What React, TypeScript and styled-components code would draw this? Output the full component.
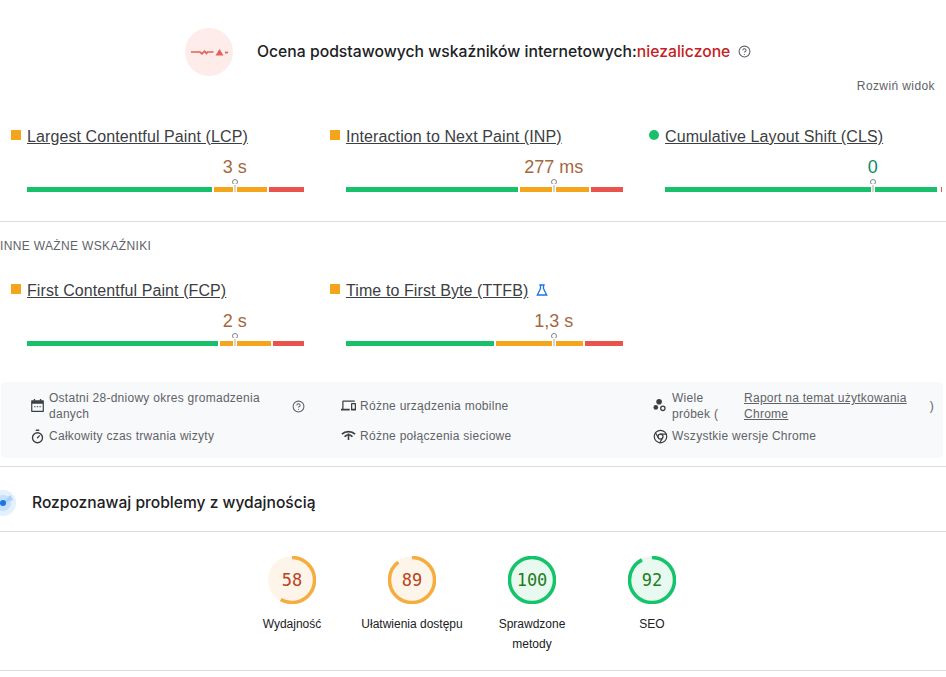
import React from "react";
import styled, { createGlobalStyle } from "styled-components";
import { Chromium, CircleHelp, Timer } from "lucide-react";

const GlobalStyle = createGlobalStyle`
  html, body {
    margin: 0;
    background: #ffffff;
    overflow: hidden;
  }
  body {
    font-family: "Liberation Sans", Arial, sans-serif;
    color: #202124;
  }
`;

type Rating = "average" | "good";

const metricsTop = [
  { name: "Largest Contentful Paint (LCP)", value: "3 s", rating: "average", segs: [185, 53, 35] },
  { name: "Interaction to Next Paint (INP)", value: "277 ms", rating: "average", segs: [172, 69, 32] },
  { name: "Cumulative Layout Shift (CLS)", value: "0", rating: "good", segs: [273, 0, 1] },
];

const metricsOther = [
  { name: "First Contentful Paint (FCP)", value: "2 s", rating: "average", segs: [191, 51, 31] },
  { name: "Time to First Byte (TTFB)", value: "1,3 s", rating: "average", segs: [148, 87, 38], lab: true },
];

const gauges = [
  { label: "Wydajność", score: 58 },
  { label: "Ułatwienia dostępu", score: 89 },
  { label: "Sprawdzone metody", score: 100 },
  { label: "SEO", score: 92 },
];

function CalendarIcon() {
  return (
    <InfoSvg viewBox="0 0 16 16">
      <path d="M4 1h1.500v2H4zM10.500 1H12v2h-1.500z" fill="#3c4043" />
      <path d="M2 2.500h12a.8.8 0 0 1 .8.8v10.900a.8.8 0 0 1-.8.8H2a.8.8 0 0 1-.8-.8V3.300a.8.8 0 0 1 .8-.8zM2.500 6v7.700h11V6z" fill="#3c4043" fillRule="evenodd" />
      <path d="M4.500 8.500h1.400v1.400H4.500zM7.300 8.500h1.400v1.400H7.300zM10.100 8.500h1.400v1.400h-1.400z" fill="#5f6368" />
    </InfoSvg>
  );
}

function DevicesIcon() {
  return (
    <InfoSvg viewBox="0 0 24 24">
      <path
        d="M4 6h18V4H4c-1.100 0-2 .9-2 2v11H0v3h14v-3H4V6zm19 2h-6c-.55 0-1 .45-1 1v10c0 .55.45 1 1 1h6c.55 0 1-.45 1-1V9c0-.55-.45-1-1-1zm-1 9h-4v-7h4v7z"
        fill="#3c4043"
      />
    </InfoSvg>
  );
}

function NetworkIcon() {
  return (
    <InfoSvg viewBox="0 0 16 16">
      <path d="M1 6.600C4.800 2.900 11.200 2.900 15 6.600" fill="none" stroke="#3c4043" strokeWidth="2" />
      <path d="M3.800 9.300C5 8 6.300 7.400 7.300 7.300M8.700 7.300c1.200.1 2.500.7 3.500 2" fill="none" stroke="#3c4043" strokeWidth="1.800" />
      <path d="M8 5.800v7" stroke="#3c4043" strokeWidth="1.700" />
    </InfoSvg>
  );
}

function SamplesIcon() {
  return (
    <InfoSvg viewBox="0 0 16 16">
      <circle cx="6.500" cy="4" r="3" fill="#3c4043" />
      <circle cx="3" cy="10" r="2.500" fill="#3c4043" />
      <circle cx="10.500" cy="11" r="2.300" fill="none" stroke="#3c4043" strokeWidth="1.400" />
    </InfoSvg>
  );
}

function Gauge({ score }: { score: number }) {
  const good = score >= 90;
  const radius = 22.5;
  const length = 2 * Math.PI * radius;
  return (
    <GaugeRing>
      <svg viewBox="0 0 48 48" width="48" height="48">
        <circle cx="24" cy="24" r="24" fill={good ? "#e8f9f0" : "#fef5ea"} />
        <circle
          cx="24"
          cy="24"
          r={radius}
          fill="none"
          stroke={good ? "#14c46b" : "#f5ad3f"}
          strokeWidth="3.500"
          strokeDasharray={`${(length * score) / 100} ${length}`}
          transform="rotate(-90 24 24)"
        />
      </svg>
      <GaugeScore $good={good}>{score}</GaugeScore>
    </GaugeRing>
  );
}

function MetricCard({ name, value, rating, segs, lab }: { name: string; value: string; rating: string; segs: number[]; lab?: boolean }) {
  return (
    <Card>
      <TitleRow>
        <StatusMark $rating={rating as Rating} />
        <MetricLink>{name}</MetricLink>
        {lab && (
          <LabIcon viewBox="0 0 12 12">
            <path d="M3.300 1h5.400M4.500 1v3.500L1.300 11h9.400L7.500 4.500V1" fill="none" stroke="#1a73e8" strokeWidth="1.300" />
          </LabIcon>
        )}
      </TitleRow>
      <CardBody>
        <Value $rating={rating as Rating}>{value}</Value>
        <Bar>
          <Segment $w={segs[0]} $color="#19c06c" />
          <Segment $w={segs[1]} $color="#f5a51c" />
          <Segment $w={segs[2]} $color="#e8544c" />
          <Marker />
        </Bar>
      </CardBody>
    </Card>
  );
}

export default function App() {
  return (
    <Page>
      <GlobalStyle />
      <Header>
        <Badge>
          <svg viewBox="0 0 48 48" width="48" height="48">
            <path d="M6 24h9l2 1.800 2.500-2.600 2 2.200 1-1.400h6" fill="none" stroke="#e0635a" strokeWidth="1.700" />
            <path d="M30.500 27.500l4-6.500 4 6.500z" fill="#e0635a" />
            <path d="M40 24.500h3" stroke="#e0635a" strokeWidth="1.700" />
          </svg>
        </Badge>
        <Verdict>
          Ocena podstawowych wskaźników internetowych:<Failed>niezaliczone</Failed>
        </Verdict>
        <HelpGlyph size={13} />
      </Header>
      <ExpandRow>Rozwiń widok</ExpandRow>

      <MetricGrid>
        {metricsTop.map((m) => (
          <MetricCard key={m.name} {...m} />
        ))}
      </MetricGrid>

      <Divider $top={29} />
      <SectionLabel>INNE WAŻNE WSKAŹNIKI</SectionLabel>

      <MetricGrid $top={26}>
        {metricsOther.map((m) => (
          <MetricCard key={m.name} {...m} />
        ))}
      </MetricGrid>

      <InfoBox>
        <InfoItem>
          <CalendarIcon />
          <InfoRest>
            <PeriodText>Ostatni 28-dniowy okres gromadzenia danych</PeriodText>
            <InfoHelp size={13} />
          </InfoRest>
        </InfoItem>
        <InfoItem>
          <DevicesIcon />
          <InfoRest>Różne urządzenia mobilne</InfoRest>
        </InfoItem>
        <InfoItem>
          <SamplesIcon />
          <InfoRest>
            <SampleText>Wiele próbek (</SampleText>
            <ReportLink>Raport na temat użytkowania Chrome</ReportLink>
            <span>)</span>
          </InfoRest>
        </InfoItem>
        <InfoItem>
          <Timer size={15} color="#3c4043" strokeWidth={2.2} />
          <InfoRest>Całkowity czas trwania wizyty</InfoRest>
        </InfoItem>
        <InfoItem>
          <NetworkIcon />
          <InfoRest>Różne połączenia sieciowe</InfoRest>
        </InfoItem>
        <InfoItem>
          <Chromium size={15} color="#3c4043" strokeWidth={2} />
          <InfoRest>Wszystkie wersje Chrome</InfoRest>
        </InfoItem>
      </InfoBox>

      <Divider $top={8} />
      <DiagnoseHeader>
        <Radar viewBox="0 0 26 26" width="26" height="26">
          <circle cx="13" cy="13" r="13" fill="#e3f0fe" />
          <circle cx="13" cy="13" r="8" fill="#c6e0fc" />
          <path d="M13 13L20 5a11 11 0 0 1 3 5z" fill="#a9d0fb" />
          <circle cx="13" cy="13" r="3" fill="#1a73e8" />
        </Radar>
        <DiagnoseTitle>Rozpoznawaj problemy z wydajnością</DiagnoseTitle>
      </DiagnoseHeader>
      <Divider />

      <GaugeRow>
        {gauges.map((g) => (
          <GaugeItem key={g.label}>
            <Gauge score={g.score} />
            <GaugeLabel>{g.label}</GaugeLabel>
          </GaugeItem>
        ))}
      </GaugeRow>
      <Divider $top={17} />
    </Page>
  );
}

const Page = styled.div`
  width: 946px;
  height: 677px;
  overflow: hidden;
`;

const Header = styled.div`
  display: flex;
  align-items: center;
  padding: 28px 0 0 185px;
`;

const Badge = styled.div`
  width: 48px;
  height: 48px;
  border-radius: 50%;
  background: #fdecea;
  margin-right: 24px;
  flex: none;
  svg {
    display: block;
  }
`;

const Verdict = styled.div`
  font-family: Inter, sans-serif;
  font-size: 15.73px;
  font-weight: 500;
  margin-top: -1px;
  color: #202124;
`;

const Failed = styled.span`
  color: #c5221f;
`;

const HelpGlyph = styled(CircleHelp)`
  color: #5f6368;
  margin: -1px 0 0 8px;
`;

const ExpandRow = styled.div`
  margin-top: 2px;
  padding-right: 11px;
  text-align: right;
  font-size: 12px;
  line-height: 16px;
  letter-spacing: 0.4px;
  color: #5f6368;
`;

const MetricGrid = styled.div<{ $top?: number }>`
  display: grid;
  grid-template-columns: repeat(3, 319px);
  padding-left: 11px;
  margin-top: ${(p) => p.$top ?? 32}px;
`;

const Card = styled.div`
  width: 293px;
`;

const TitleRow = styled.div`
  display: flex;
  align-items: center;
  height: 20px;
  padding-top: 2px;
  box-sizing: border-box;
`;

const StatusMark = styled.span<{ $rating: Rating }>`
  width: 10px;
  height: 10px;
  flex: none;
  margin: -4px 6px 0 0;
  background: ${(p) => (p.$rating === "good" ? "#19c06c" : "#f5a51c")};
  border-radius: ${(p) => (p.$rating === "good" ? "50%" : "0")};
`;

const MetricLink = styled.a`
  font-size: 16px;
  line-height: 18px;
  letter-spacing: 0.1px;
  color: #3c4043;
  text-decoration: underline;
  white-space: nowrap;
`;

const LabIcon = styled.svg`
  width: 12px;
  height: 12px;
  flex: none;
  margin: -3px 0 0 8px;
`;

const CardBody = styled.div`
  margin: 10px 0 0 16px;
  width: 277px;
`;

const Value = styled.div<{ $rating: Rating }>`
  width: fit-content;
  margin-left: 75%;
  transform: translateX(-50%);
  font-size: 18px;
  line-height: 22px;
  color: ${(p) => (p.$rating === "good" ? "#0d8a5f" : "#a5673f")};
`;

const Bar = styled.div`
  position: relative;
  display: flex;
  gap: 2px;
  height: 5px;
  margin-top: 9px;
`;

const Segment = styled.div<{ $w: number; $color: string }>`
  width: ${(p) => p.$w}px;
  background: ${(p) => p.$color};
`;

const Marker = styled.div`
  position: absolute;
  left: 75%;
  top: -8px;
  width: 4px;
  height: 4px;
  margin-left: -3px;
  border: 1px solid #80868b;
  border-radius: 50%;
  background: #fff;
  &::after {
    content: "";
    position: absolute;
    left: 1px;
    top: 5px;
    width: 2px;
    height: 7px;
    background: #d8d4c8;
    box-shadow: 0 0 0 1px #fff;
  }
`;

const Divider = styled.div<{ $top?: number }>`
  height: 1px;
  background: #dadce0;
  margin-top: ${(p) => p.$top ?? 0}px;
`;

const SectionLabel = styled.div`
  margin-top: 16px;
  font-size: 12px;
  line-height: 16px;
  letter-spacing: 0.35px;
  color: #5f6368;
`;

const InfoBox = styled.div`
  display: grid;
  grid-template-columns: 280px 281px 281px;
  column-gap: 31px;
  row-gap: 6px;
  align-items: center;
  box-sizing: border-box;
  width: 942px;
  margin: 36px 0 0 1px;
  padding: 8px 0 14px 29px;
  background: #f8f9fa;
  border-radius: 4px;
  font-size: 12px;
  line-height: 16px;
  letter-spacing: 0.27px;
  color: #5f6368;
`;

const InfoItem = styled.div`
  display: flex;
  align-items: center;
  gap: 4px;
  svg {
    flex: none;
  }
`;

const InfoSvg = styled.svg`
  width: 15px;
  height: 15px;
  margin-top: -2px;
`;

const InfoRest = styled.div`
  flex: 1;
  display: flex;
  align-items: center;
`;

const PeriodText = styled.span`
  width: 220px;
  margin-right: 23px;
`;

const InfoHelp = styled(CircleHelp)`
  color: #5f6368;
`;

const SampleText = styled.span`
  width: 72px;
  flex: none;
`;

const ReportLink = styled.a`
  flex: 1;
  padding-right: 12px;
  color: #5f6368;
  text-decoration: underline;
`;

const DiagnoseHeader = styled.div`
  display: flex;
  align-items: center;
  padding: 24px 0 16px;
  height: 24px;
`;

const Radar = styled.svg`
  margin-left: -10px;
  margin-right: 16px;
  flex: none;
`;

const DiagnoseTitle = styled.div`
  font-family: Inter, sans-serif;
  font-size: 15.6px;
  font-weight: 500;
  line-height: 24px;
  margin-top: -1px;
  color: #202124;
`;

const GaugeRow = styled.div`
  display: flex;
  justify-content: center;
  margin-top: 24px;
  padding-right: 2px;
  height: 97px;
`;

const GaugeItem = styled.div`
  width: 120px;
  padding: 0 8px;
  box-sizing: border-box;
  display: flex;
  flex-direction: column;
  align-items: center;
`;

const GaugeRing = styled.div`
  position: relative;
  width: 48px;
  height: 48px;
  svg {
    display: block;
  }
`;

const GaugeScore = styled.div<{ $good: boolean }>`
  position: absolute;
  inset: 0;
  display: flex;
  align-items: center;
  justify-content: center;
  font-family: "DejaVu Sans Mono", monospace;
  font-size: 17px;
  color: ${(p) => (p.$good ? "#1e7d1e" : "#b9431c")};
`;

const GaugeLabel = styled.div`
  margin-top: 10px;
  font-size: 12px;
  line-height: 20px;
  text-align: center;
  color: #202124;
`;
